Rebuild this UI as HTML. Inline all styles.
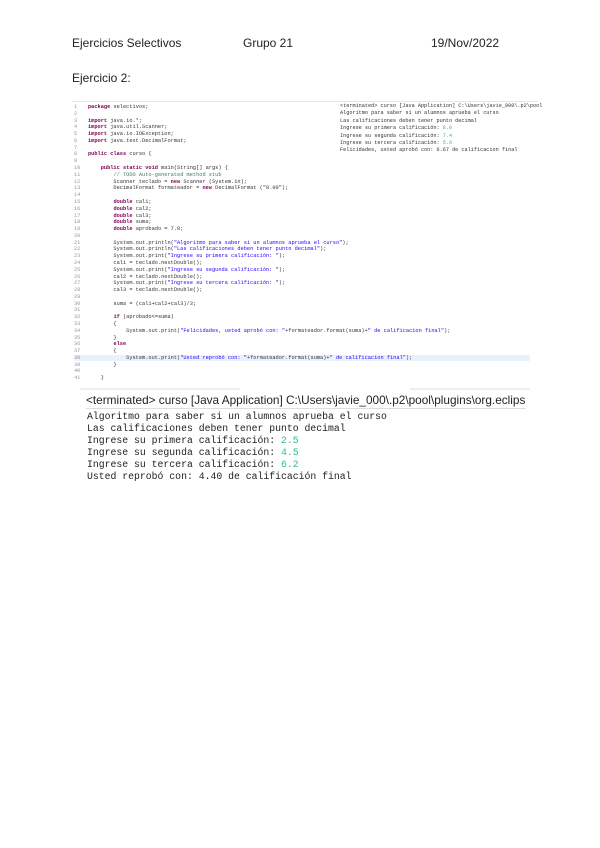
<!DOCTYPE html>
<html><head><meta charset="utf-8"><style>
body{margin:0;width:600px;height:848px;background:#fff;position:relative;overflow:hidden;font-family:"Liberation Sans",sans-serif;}
.t{position:absolute;font-size:12px;color:#222;white-space:nowrap}
#code{position:absolute;left:74px;top:104px;font-family:"Liberation Mono",monospace;font-size:5.3px;line-height:6.78px;color:#333;white-space:pre}
#code b{color:#7f0055}
#code .s{color:#2a00ff}
#code .c{color:#3f7f5f}
#code .n{color:#999;display:inline-block;width:14px}
.hl{background:#e8f2fe}
#c1{position:absolute;left:340px;top:103px;width:196px;font-family:"Liberation Mono",monospace;font-size:5.2px;line-height:7.4px;color:#333;white-space:pre}
#c2{position:absolute;left:86px;top:393px;width:440px;}
#c2 .h{font-size:11.8px;color:#222;white-space:nowrap;border-bottom:1px solid #ddd;padding-bottom:1px}
#c2 .o{font-family:"Liberation Mono",monospace;font-size:9.8px;line-height:12.1px;color:#222;white-space:pre;margin-left:1px;margin-top:2px}
.g{color:#2bbf8f}
</style></head><body>
<div class="t" style="left:72px;top:36px">Ejercicios Selectivos</div>
<div class="t" style="left:243px;top:36px">Grupo 21</div>
<div class="t" style="left:431px;top:36px">19/Nov/2022</div>
<div class="t" style="left:72px;top:71px">Ejercicio 2:</div>
<div style="position:absolute;left:72px;top:101px;width:266px;height:1px;background:#e6e6e6"></div>
<div style="position:absolute;left:338px;top:101px;width:200px;height:1px;background:#e6e6e6"></div>
<div id="code"><span class="n">1</span><b>package</b> selectivos;
<span class="n">2</span>
<span class="n">3</span><b>import</b> java.io.*;
<span class="n">4</span><b>import</b> java.util.Scanner;
<span class="n">5</span><b>import</b> java.io.IOException;
<span class="n">6</span><b>import</b> java.text.DecimalFormat;
<span class="n">7</span>
<span class="n">8</span><b>public class</b> curso {
<span class="n">9</span>
<span class="n">10</span>    <b>public static void</b> main(String[] args) {
<span class="n">11</span>        <span class="c">// TODO Auto-generated method stub</span>
<span class="n">12</span>        Scanner teclado = <b>new</b> Scanner (System.in);
<span class="n">13</span>        DecimalFormat formateador = <b>new</b> DecimalFormat ("0.00");
<span class="n">14</span>
<span class="n">15</span>        <b>double</b> cal1;
<span class="n">16</span>        <b>double</b> cal2;
<span class="n">17</span>        <b>double</b> cal3;
<span class="n">18</span>        <b>double</b> suma;
<span class="n">19</span>        <b>double</b> aprobado = 7.0;
<span class="n">20</span>
<span class="n">21</span>        System.out.println(<span class="s">"Algoritmo para saber si un alumnos aprueba el curso"</span>);
<span class="n">22</span>        System.out.println(<span class="s">"Las calificaciones deben tener punto decimal"</span>);
<span class="n">23</span>        System.out.print(<span class="s">"Ingrese su primera calificación: "</span>);
<span class="n">24</span>        cal1 = teclado.nextDouble();
<span class="n">25</span>        System.out.print(<span class="s">"Ingrese su segunda calificación: "</span>);
<span class="n">26</span>        cal2 = teclado.nextDouble();
<span class="n">27</span>        System.out.print(<span class="s">"Ingrese su tercera calificación: "</span>);
<span class="n">28</span>        cal3 = teclado.nextDouble();
<span class="n">29</span>
<span class="n">30</span>        suma = (cal1+cal2+cal3)/3;
<span class="n">31</span>
<span class="n">32</span>        <b>if</b> (aprobado&lt;=suma)
<span class="n">33</span>        {
<span class="n">34</span>            System.out.print(<span class="s">"Felicidades, usted aprobó con: "</span>+formateador.format(suma)+<span class="s">" de calificacion final"</span>);
<span class="n">35</span>        }
<span class="n">36</span>        <b>else</b>
<span class="n">37</span>        {
<span class="hl"><span class="n">38</span>            System.out.print(<span class="s">"Usted reprobó con: "</span>+formateador.format(suma)+<span class="s">" de calificacion final"</span>);                                     </span>
<span class="n">39</span>        }
<span class="n">40</span>
<span class="n">41</span>    }</div>
<div id="c1">&lt;terminated&gt; curso [Java Application] C:\Users\javie_000\.p2\pool
Algoritmo para saber si un alumnos aprueba el curso
Las calificaciones deben tener punto decimal
Ingrese su primera calificación: <span class="g">8.0</span>
Ingrese su segunda calificación: <span class="g">7.4</span>
Ingrese su tercera calificación: <span class="g">5.6</span>
Felicidades, usted aprobó con: 6.67 de calificacion final</div>
<div style="position:absolute;left:80px;top:388px;width:160px;height:2px;background:#eee"></div>
<div style="position:absolute;left:410px;top:388px;width:120px;height:2px;background:#eee"></div>
<div id="c2"><div class="h">&lt;terminated&gt; curso [Java Application] C:\Users\javie_000\.p2\pool\plugins\org.eclips</div>
<div class="o">Algoritmo para saber si un alumnos aprueba el curso
Las calificaciones deben tener punto decimal
Ingrese su primera calificación: <span class="g">2.5</span>
Ingrese su segunda calificación: <span class="g">4.5</span>
Ingrese su tercera calificación: <span class="g">6.2</span>
Usted reprobó con: 4.40 de calificación final</div></div>
</body></html>
